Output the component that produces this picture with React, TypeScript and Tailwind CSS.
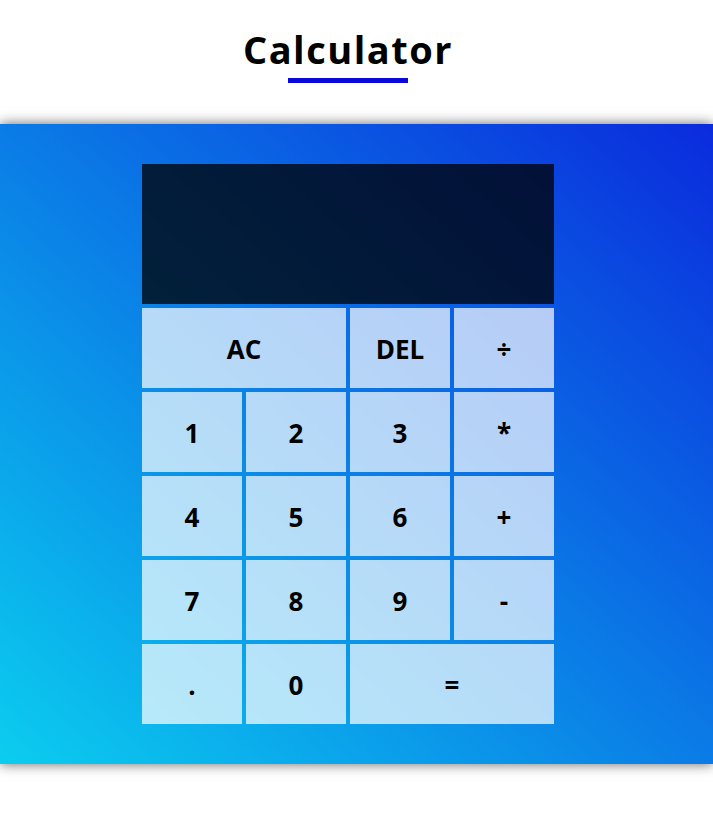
import React from "react";

const font = { fontFamily: '"Open Sans", "Noto Sans", sans-serif' };

function Btn({ label, span2 = false }: { label: string; span2?: boolean }) {
  return (
    <button
      className={
        "flex items-center justify-center bg-white/70 pt-[3px] text-[26px] font-bold text-black outline-none" +
        (span2 ? " col-span-2" : "")
      }
    >
      {label}
    </button>
  );
}

export default function App() {
  return (
    <div className="min-h-[822px] w-full bg-white" style={font}>
      <div className="flex w-[696px] flex-col items-center pt-[23px]">
        <h1 className="text-[38px] font-bold leading-[52px] tracking-[1.5px] text-black">Calculator</h1>
        <div className="mt-[3px] h-[5px] w-[120px] bg-[#0a0ad8]" />
      </div>
      <div className="mt-[41px] h-[640px] w-full bg-[linear-gradient(to_top_right,#0bcdef,#0a2bdd)] shadow-[0_0_12px_rgba(0,0,0,0.6)]">
        <div className="flex w-[696px] justify-center pt-[40px]">
          <div className="grid grid-cols-[repeat(4,100px)] grid-rows-[140px_repeat(5,80px)] gap-[4px]">
            <div className="col-span-4 bg-black/75" />
            <Btn label="AC" span2 />
            <Btn label="DEL" />
            <Btn label="÷" />
            <Btn label="1" />
            <Btn label="2" />
            <Btn label="3" />
            <Btn label="*" />
            <Btn label="4" />
            <Btn label="5" />
            <Btn label="6" />
            <Btn label="+" />
            <Btn label="7" />
            <Btn label="8" />
            <Btn label="9" />
            <Btn label="-" />
            <Btn label="." />
            <Btn label="0" />
            <Btn label="=" span2 />
          </div>
        </div>
      </div>
    </div>
  );
}
